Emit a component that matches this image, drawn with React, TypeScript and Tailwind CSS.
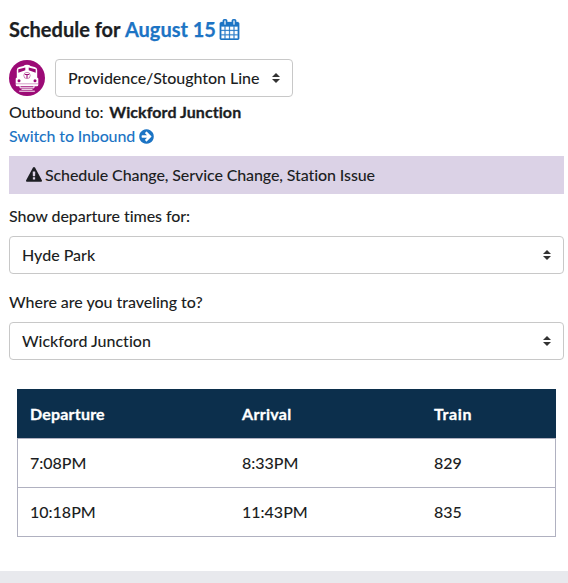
import React from "react";

function CalendarIcon() {
  return (
    <svg viewBox="0 0 1792 1792" className="ml-[3px] h-[21px] w-[21px] shrink-0" fill="currentColor" aria-hidden="true">
      <path d="M192 1664h288v-288h-288zM544 1664h320v-288h-320zM192 1312h288v-320h-288zM544 1312h320v-320h-320zM192 928h288v-288h-288zM928 1664h320v-288h-320zM544 928h320v-288h-320zM1312 1664h288v-288h-288zM928 1312h320v-320h-320zM576 448v-288q0-13-9.500-22.500t-22.500-9.500h-64q-13 0-22.500 9.500t-9.500 22.500v288q0 13 9.500 22.500t22.500 9.500h64q13 0 22.500-9.500t9.500-22.500zM1312 1312h288v-320h-288zM928 928h320v-288h-320zM1312 928h288v-288h-288zM1344 448v-288q0-13-9.500-22.500t-22.500-9.500h-64q-13 0-22.500 9.500t-9.500 22.500v288q0 13 9.500 22.500t22.500 9.500h64q13 0 22.500-9.500t9.500-22.500zM1728 384v1280q0 52-38 90t-90 38h-1408q-52 0-90-38t-38-90v-1280q0-52 38-90t90-38h128v-96q0-66 47-113t113-47h64q66 0 113 47t47 113v96h384v-96q0-66 47-113t113-47h64q66 0 113 47t47 113v96h128q52 0 90 38t38 90z" fillRule="evenodd" stroke="currentColor" strokeWidth="24" />
    </svg>
  );
}

function ArrowCircleIcon() {
  return (
    <svg viewBox="0 0 1792 1792" className="ml-[3px] h-[17px] w-[17px]" fill="currentColor" aria-hidden="true">
      <path d="M1413 896q0-27-18-45l-91-91-362-362q-18-18-45-18t-45 18l-91 91q-18 18-18 45t18 45l189 189h-502q-26 0-45 19t-19 45v128q0 26 19 45t45 19h502l-189 189q-19 19-19 45t19 45l91 91q18 18 45 18t45-18l362-362 91-91q18-18 18-45zm251 0q0 209-103 385.500t-279.500 279.500-385.500 103-385.500-103-279.500-279.500-103-385.500 103-385.500 279.500-279.500 385.500-103 385.500 103 279.500 279.500 103 385.500z" fillRule="evenodd" />
    </svg>
  );
}

function WarningIcon() {
  return (
    <svg viewBox="0 0 1792 1792" className="mr-[3px] h-4 w-4" fill="currentColor" aria-hidden="true">
      <path d="M1024 1375v-190q0-14-9.500-23.500t-22.500-9.500h-192q-13 0-22.500 9.500t-9.500 23.500v190q0 14 9.500 23.500t22.500 9.500h192q13 0 22.500-9.500t9.500-23.500zm-2-374l18-459q0-12-10-19-13-11-24-11h-220q-11 0-24 11-10 7-10 21l17 457q0 10 10 16.500t24 6.500h185q14 0 23.500-6.500t10.500-16.500zm-14-934l768 1408q35 63-2 126-17 29-46.500 46t-63.500 17h-1536q-34 0-63.500-17t-46.500-46q-37-63-2-126l768-1408q17-31 47-49t65-18 65 18 47 49z" fillRule="evenodd" />
    </svg>
  );
}

function TrainIcon() {
  return (
    <svg viewBox="0 0 36 36" className="h-9 w-9 shrink-0" aria-hidden="true">
      <circle cx="18" cy="18" r="18" fill="#9c0a76" />
      <path d="M7.800 10Q7.800 7.500 10.500 6.900L14.500 6Q15.500 4.800 18 4.800T21.500 6L25.500 6.900Q28.200 7.500 28.200 10V17.500L29.300 18.500V24.700Q29.300 26.200 27.800 26.200H8.200Q6.700 26.200 6.700 24.700V18.500L7.800 17.500Z" fill="#fff" />
      <path d="M9.300 9.300L16.300 7.600V10.300L9.300 12.700ZM26.700 9.300L19.700 7.600V10.300L26.700 12.700Z" fill="#9c0a76" />
      <circle cx="18" cy="15.500" r="3.200" fill="none" stroke="#9c0a76" strokeWidth=".5" />
      <path d="M15.900 14.500H20.100M18 14.500V17.900" stroke="#9c0a76" strokeWidth="1.100" />
      <circle cx="10" cy="20.700" r="1.500" fill="#9c0a76" />
      <circle cx="26" cy="20.700" r="1.500" fill="#9c0a76" />
      <path d="M6.700 23.800H29.300" stroke="#9c0a76" strokeWidth=".4" />
      <path d="M11 26V27.800H25V26M12.500 29.300H23.500M10.200 31.200H25.800" fill="none" stroke="#fff" strokeWidth="1" />
    </svg>
  );
}

function SelectBox({ value, className = "" }: { value: string; className?: string }) {
  return (
    <button
      type="button"
      className={`flex h-[38px] items-center justify-between rounded-[4px] border border-[#c8c8c8] bg-white pr-3 pl-3 text-left ${className}`}
    >
      <span>{value}</span>
      <svg viewBox="0 0 8 10" className="h-[10px] w-2" fill="#333" aria-hidden="true">
        <path d="M4 0L8 4H0ZM0 6H8L4 10Z" />
      </svg>
    </button>
  );
}

const trips = [
  { departure: "7:08PM", arrival: "8:33PM", train: "829" },
  { departure: "10:18PM", arrival: "11:43PM", train: "835" },
];

export default function App() {
  return (
    <div className="flex h-[583px] w-[568px] flex-col overflow-hidden bg-white font-['Lato',sans-serif] text-base leading-6 font-medium text-[#1c1e23] [font-variant-ligatures:none]">
      <main className="flex flex-1 flex-col pt-[17px] pr-1 pl-[9px]">
        <h2 className="flex h-6 items-center text-xl leading-6 font-bold [-webkit-text-stroke:0.25px_currentColor]">
          <span className="whitespace-pre">Schedule for </span>
          <a className="flex items-center text-[#1c74c4]">
            <span className="tracking-[-0.03px]">August 15</span>
            <CalendarIcon />
          </a>
        </h2>
        <div className="mt-[18px] flex items-center gap-2.5">
          <TrainIcon />
          <SelectBox value="Providence/Stoughton Line" className="w-[238px] tracking-[-0.05px]" />
        </div>
        <div className="mt-[3px]">
          <span className="tracking-[-0.08px]">Outbound to: </span>
          <strong className="ml-[2px] font-bold tracking-[0.07px] [-webkit-text-stroke:0.3px_currentColor]">Wickford Junction</strong>
        </div>
        <a className="flex items-center tracking-[-0.15px] text-[#1c74c4]">
          Switch to Inbound
          <ArrowCircleIcon />
        </a>
        <div className="mt-2 flex h-[38px] items-center bg-[#dbd2e6] pl-[17px] tracking-[-0.1px]">
          <WarningIcon />
          Schedule Change, Service Change, Station Issue
        </div>
        <label className="mt-[10px] tracking-[-0.07px]">Show departure times for:</label>
        <SelectBox value="Hyde Park" className="mt-2" />
        <label className="mt-4 tracking-[-0.03px]">Where are you traveling to?</label>
        <SelectBox value="Wickford Junction" className="mt-2" />
        <table className="mt-[29px] ml-2 w-[539px] table-fixed border-separate border-spacing-0 text-left">
          <colgroup>
            <col className="w-[212px]" />
            <col className="w-[192px]" />
            <col className="w-[135px]" />
          </colgroup>
          <thead>
            <tr className="h-[49px] bg-[#0c2f4c] tracking-[0.2px] text-white [-webkit-text-stroke:0.3px_currentColor]">
              <th className="pl-[13px] font-bold">Departure</th>
              <th className="pl-[13px] font-bold tracking-[0.3px]">Arrival</th>
              <th className="pl-[13px] font-bold tracking-[0.6px]">Train</th>
            </tr>
          </thead>
          <tbody>
            {trips.map((trip) => (
              <tr
                key={trip.train}
                className="h-[49px] *:border-t *:border-[#b0b1c0] last:h-[50px] last:*:border-b"
              >
                <td className="border-l pl-3">{trip.departure}</td>
                <td className="pl-[13px]">{trip.arrival}</td>
                <td className="border-r pl-[13px]">{trip.train}</td>
              </tr>
            ))}
          </tbody>
        </table>
      </main>
      <footer className="h-3 bg-[#e8e9ed]" />
    </div>
  );
}
